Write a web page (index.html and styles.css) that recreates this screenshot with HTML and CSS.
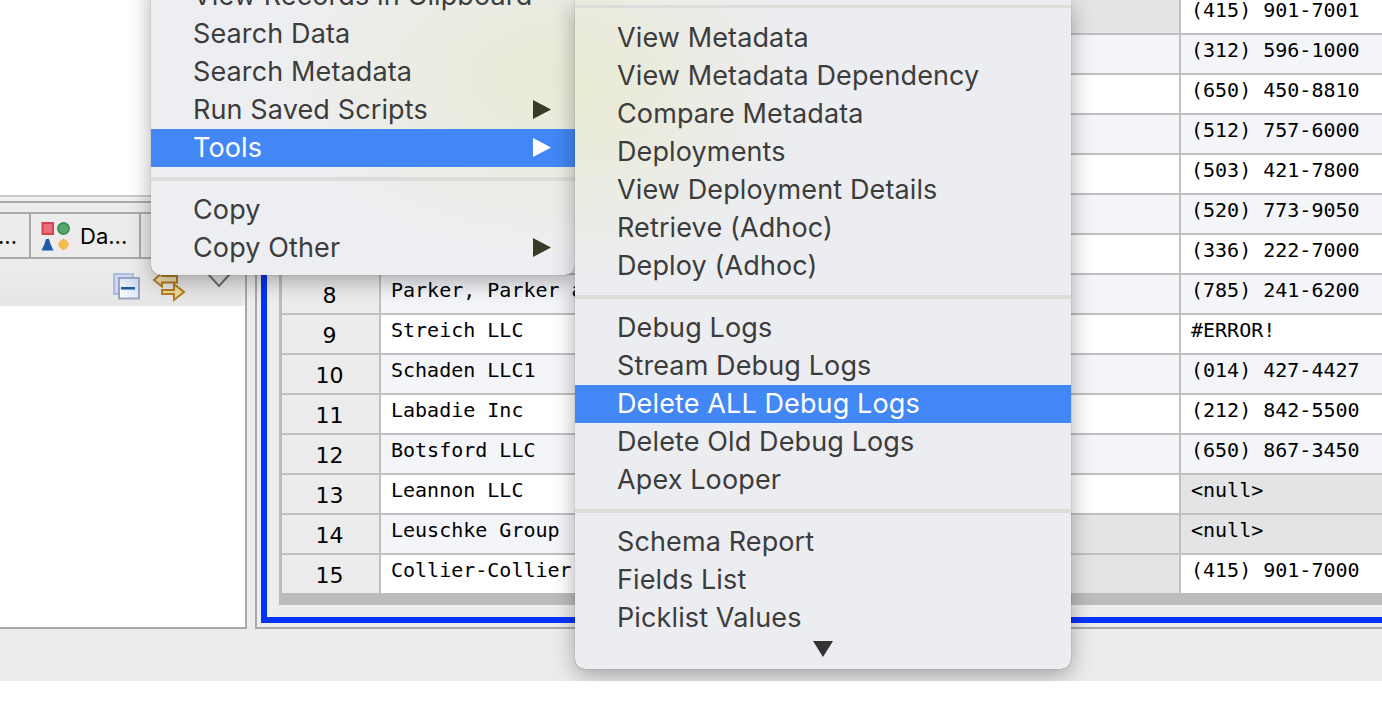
FILE: index.html
```html
<!DOCTYPE html>
<html lang="en">
<head>
<meta charset="utf-8">
<title>Tools menu</title>
<link rel="stylesheet" href="styles.css">
</head>
<body>
<div class="app">
  <section class="left">
    <div class="left-top"></div>
    <div class="left-rule"></div>
    <div class="tabs">
      <div class="tab tab-first">...</div>
      <div class="tab tab-data">
        <svg class="tab-icon" width="30" height="30" viewBox="0 0 30 30">
          <rect x="1.5" y="2" width="10.5" height="11" fill="#ea6f7c" stroke="#d9404f" stroke-width="2"/>
          <circle cx="22.5" cy="7.5" r="5.5" fill="#5aa86e" stroke="#3f9153" stroke-width="2"/>
          <path d="M5 18 H8 L9.5 23 L12.5 29.5 H0.5 L3.5 23 Z" fill="#1f5aa6"/>
          <path d="M22.5 17.5 L28 23.5 L22.5 29.5 L17 23.5 Z" fill="#e3a63a"/>
          <circle cx="22.5" cy="23.5" r="5" fill="#f5bb50"/>
        </svg>
        <span>Da...</span>
      </div>
    </div>
    <div class="toolbar">
      <svg width="27" height="27" viewBox="0 0 27 27">
        <rect x="1" y="1" width="19" height="20" fill="#cdd8f0" stroke="#aebbdc" stroke-width="2"/>
        <defs><linearGradient id="fr" x1="0" y1="1" x2="1" y2="0"><stop offset="0" stop-color="#ffffff"/><stop offset="1" stop-color="#c4d6f2"/></linearGradient></defs>
        <rect x="6" y="5" width="20" height="20.5" fill="url(#fr)" stroke="#97a5c3" stroke-width="2"/>
        <rect x="8" y="14" width="14" height="2.5" fill="#1f5a9e"/>
      </svg>
      <svg class="tool-sync" width="34" height="30" viewBox="0 0 34 30">
        <path d="M25 3 H10 V0 L2 7 L10 13.5 V9.5 H25 Z" fill="#f2e2b0" stroke="#b57f1c" stroke-width="2"/>
        <path d="M10 17 H22 V11 L32 19 L22 27 V21 H10 Z" fill="#f0dc9c" stroke="#b57f1c" stroke-width="2"/>
      </svg>
      <svg class="tool-view" width="26" height="16" viewBox="0 0 26 16">
        <path d="M2 1 H24 L13 13 Z" fill="#e6e6e6" stroke="#6f6f6f" stroke-width="2"/>
      </svg>
    </div>
    <div class="left-body"></div>
  </section>

  <section class="right">
    <div class="frame">
      <div class="grid">
        <div class="row"><div class="num">1</div><div class="name"></div><div class="mid null"></div><div class="phone">(415) 901-7001</div></div>
        <div class="row alt"><div class="num">2</div><div class="name"></div><div class="mid"></div><div class="phone">(312) 596-1000</div></div>
        <div class="row"><div class="num">3</div><div class="name"></div><div class="mid"></div><div class="phone">(650) 450-8810</div></div>
        <div class="row alt"><div class="num">4</div><div class="name"></div><div class="mid"></div><div class="phone">(512) 757-6000</div></div>
        <div class="row"><div class="num">5</div><div class="name"></div><div class="mid"></div><div class="phone">(503) 421-7800</div></div>
        <div class="row alt"><div class="num">6</div><div class="name"></div><div class="mid"></div><div class="phone">(520) 773-9050</div></div>
        <div class="row"><div class="num">7</div><div class="name"></div><div class="mid"></div><div class="phone">(336) 222-7000</div></div>
        <div class="row alt"><div class="num">8</div><div class="name">Parker, Parker and Sons</div><div class="mid"></div><div class="phone">(785) 241-6200</div></div>
        <div class="row"><div class="num">9</div><div class="name">Streich LLC</div><div class="mid"></div><div class="phone">#ERROR!</div></div>
        <div class="row alt"><div class="num">10</div><div class="name">Schaden LLC1</div><div class="mid"></div><div class="phone">(014) 427-4427</div></div>
        <div class="row"><div class="num">11</div><div class="name">Labadie Inc</div><div class="mid"></div><div class="phone">(212) 842-5500</div></div>
        <div class="row alt"><div class="num">12</div><div class="name">Botsford LLC</div><div class="mid"></div><div class="phone">(650) 867-3450</div></div>
        <div class="row"><div class="num">13</div><div class="name">Leannon LLC</div><div class="mid"></div><div class="phone null">&lt;null&gt;</div></div>
        <div class="row alt"><div class="num">14</div><div class="name">Leuschke Group</div><div class="mid null"></div><div class="phone null">&lt;null&gt;</div></div>
        <div class="row"><div class="num">15</div><div class="name">Collier-Collier</div><div class="mid null"></div><div class="phone">(415) 901-7000</div></div>
      </div>
    </div>
  </section>

  <nav class="menu menu-main">
    <div class="item">View Records in Clipboard</div>
    <div class="item">Search Data</div>
    <div class="item">Search Metadata</div>
    <div class="item">Run Saved Scripts<svg class="arrow" width="18" height="19" viewBox="0 0 18 19"><path d="M0 0 L18 9.5 L0 19 Z"/></svg></div>
    <div class="item active">Tools<svg class="arrow" width="18" height="19" viewBox="0 0 18 19"><path d="M0 0 L18 9.5 L0 19 Z"/></svg></div>
    <div class="sep"></div>
    <div class="item">Copy</div>
    <div class="item">Copy Other<svg class="arrow" width="18" height="19" viewBox="0 0 18 19"><path d="M0 0 L18 9.5 L0 19 Z"/></svg></div>
  </nav>

  <nav class="menu menu-sub">
    <div class="sep sep-top"></div>
    <div class="item">View Metadata</div>
    <div class="item">View Metadata Dependency</div>
    <div class="item">Compare Metadata</div>
    <div class="item">Deployments</div>
    <div class="item">View Deployment Details</div>
    <div class="item">Retrieve (Adhoc)</div>
    <div class="item">Deploy (Adhoc)</div>
    <div class="sep"></div>
    <div class="item">Debug Logs</div>
    <div class="item">Stream Debug Logs</div>
    <div class="item active">Delete ALL Debug Logs</div>
    <div class="item">Delete Old Debug Logs</div>
    <div class="item">Apex Looper</div>
    <div class="sep"></div>
    <div class="item">Schema Report</div>
    <div class="item">Fields List</div>
    <div class="item">Picklist Values</div>
    <div class="more"><svg width="20" height="16" viewBox="0 0 20 16"><path d="M0 0 H20 L10 16 Z"/></svg></div>
  </nav>
</div>
</body>
</html>
```
FILE: styles.css
```css
html, body {
  margin: 0;
  padding: 0;
  background: #ffffff;
  overflow: hidden;
}

.app {
  position: relative;
  display: flex;
  gap: 8px;
  box-sizing: border-box;
  width: 1382px;
  height: 681px;
  padding-bottom: 52px;
  background: #ececec;
  overflow: hidden;
  font-family: Inter, "Liberation Sans", sans-serif;
}

/* left pane */
.left {
  display: flex;
  flex-direction: column;
  flex: 0 0 247px;
  box-sizing: border-box;
  border-right: 2px solid #a9a9a9;
  border-bottom: 2px solid #a9a9a9;
}
.left-top {
  flex: 0 0 195px;
  margin-right: -2px;
  background: #ffffff;
  border-bottom: 2px solid #cbcbcb;
}
.left-rule {
  flex: 0 0 4px;
  margin-right: -2px;
  margin-bottom: 9px;
  background: #f1f1f1;
  border-bottom: 2px solid #a9a9a9;
}
.tabs {
  display: flex;
  flex: 0 0 47px;
  box-sizing: border-box;
  margin-right: -2px;
  border-top: 2px solid #a9a9a9;
  border-bottom: 2px solid #a9a9a9;
  color: #000000;
  font-size: 22px;
}
.tab {
  display: flex;
  align-items: center;
  box-sizing: border-box;
  border-right: 2px solid #a9a9a9;
}
.tab-first {
  justify-content: flex-end;
  width: 31px;
  padding-right: 12px;
}
.tab-data {
  width: 110px;
  padding-left: 10px;
  gap: 9px;
}
.toolbar {
  display: flex;
  align-items: flex-start;
  flex: 0 0 47px;
  box-sizing: border-box;
  width: 241px;
  padding: 14px 0 0 113px;
  background: linear-gradient(#ededed, #e6e6e6);
}
.tool-sync {
  margin-left: 12px;
}
.tool-view {
  margin-left: 20px;
}
.left-body {
  flex: 1;
  background: #ffffff;
}

/* right pane */
.right {
  display: flex;
  flex-direction: column;
  justify-content: flex-end;
  flex: 1;
  box-sizing: border-box;
  padding: 0 0 4px 4px;
  border-left: 2px solid #a9a9a9;
  border-bottom: 2px solid #a9a9a9;
  overflow: hidden;
  background: #ededed;
}
.frame {
  display: flex;
  flex-direction: column;
  justify-content: flex-end;
  box-sizing: border-box;
  height: 100%;
  padding: 0 0 12px 12px;
  border-left: 6px solid #0433f6;
  border-bottom: 6px solid #0433f6;
}
.grid {
  flex: none;
  padding: 0 0 12px 3px;
  background: #bcbcbc;
}
.row {
  display: grid;
  grid-template-columns: 99px 320px 480px 1fr;
  height: 40px;
  background: #ffffff;
  font: 20px/24px "DejaVu Sans Mono", monospace;
  color: #000000;
}
.row:last-child {
  height: 38px;
}
.row.alt {
  background: #f3f5f9;
}
.row > div {
  box-sizing: border-box;
  border-bottom: 2px solid #c0c0c0;
  overflow: hidden;
  white-space: nowrap;
}
.row:last-child > div {
  border-bottom: none;
}
.num {
  padding-right: 2px;
  border-right: 2px solid #c0c0c0;
  background: #ececec;
  text-align: center;
  font: 22px/42px "DejaVu Sans", sans-serif;
}
.name {
  padding: 3px 0 0 10px;
}
.mid {
  border-right: 2px solid #c0c0c0;
}
.phone {
  padding: 3px 0 0 10px;
}
.null {
  background: #e3e4e6;
}

/* menus */
.menu {
  position: absolute;
  box-sizing: border-box;
  color: #3c3c3c;
  font-size: 27px;
  letter-spacing: 0.12px;
  box-shadow: 0 6px 22px rgba(0, 0, 0, 0.32), 0 0 1px rgba(0, 0, 0, 0.5);
}
.menu-main {
  left: 151px;
  top: -23px;
  width: 424px;
  height: 298px;
  border-radius: 0 0 10px 10px;
  background:
    radial-gradient(ellipse 280px 180px at 400px 100px, #e9ead5, rgba(233, 234, 213, 0)),
    #edeef1;
  z-index: 1;
}
.menu-sub {
  left: 575px;
  top: 0;
  width: 496px;
  height: 669px;
  padding-top: 5px;
  border-radius: 0 0 10px 10px;
  background:
    radial-gradient(ellipse 220px 190px at 0 90px, #e9ead2, rgba(233, 234, 210, 0)),
    #ecedf0;
  z-index: 2;
}
.item {
  position: relative;
  box-sizing: border-box;
  height: 38px;
  padding-left: 42px;
  line-height: 38px;
  white-space: nowrap;
}
.item.active {
  background: #4287f5;
  color: #ffffff;
}
.arrow {
  position: absolute;
  right: 24px;
  top: 9px;
  fill: #3a3a28;
}
.active .arrow {
  fill: #ffffff;
}
.sep {
  height: 4px;
  margin: 10px 0;
  background: #dcdddb;
}
.sep-top {
  height: 3px;
  margin: 0 0 11px;
}
.more {
  display: flex;
  justify-content: center;
  padding-top: 4px;
  fill: #333333;
}
```
